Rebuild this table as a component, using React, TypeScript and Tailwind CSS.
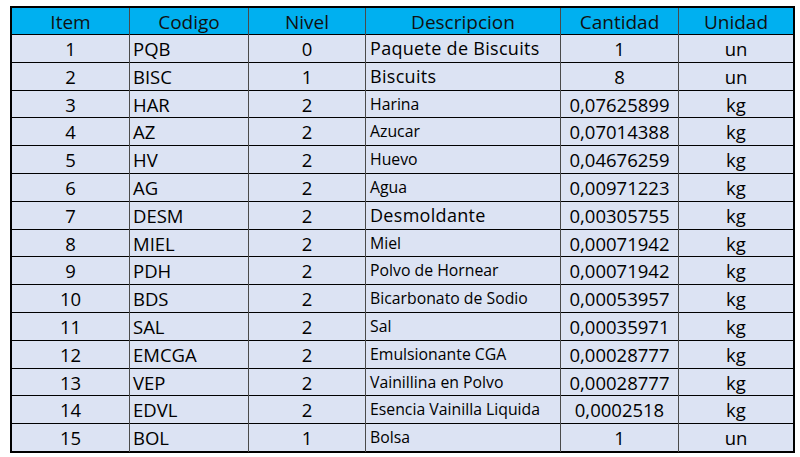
import React from 'react'

interface Row {
  item: number
  codigo: string
  nivel: number
  descripcion: string
  big?: boolean
  cantidad: string
  unidad: string
}

const rows: Row[] = [
  { item: 1, codigo: 'PQB', nivel: 0, descripcion: 'Paquete de Biscuits', big: true, cantidad: '1', unidad: 'un' },
  { item: 2, codigo: 'BISC', nivel: 1, descripcion: 'Biscuits', big: true, cantidad: '8', unidad: 'un' },
  { item: 3, codigo: 'HAR', nivel: 2, descripcion: 'Harina', cantidad: '0,07625899', unidad: 'kg' },
  { item: 4, codigo: 'AZ', nivel: 2, descripcion: 'Azucar', cantidad: '0,07014388', unidad: 'kg' },
  { item: 5, codigo: 'HV', nivel: 2, descripcion: 'Huevo', cantidad: '0,04676259', unidad: 'kg' },
  { item: 6, codigo: 'AG', nivel: 2, descripcion: 'Agua', cantidad: '0,00971223', unidad: 'kg' },
  { item: 7, codigo: 'DESM', nivel: 2, descripcion: 'Desmoldante', big: true, cantidad: '0,00305755', unidad: 'kg' },
  { item: 8, codigo: 'MIEL', nivel: 2, descripcion: 'Miel', cantidad: '0,00071942', unidad: 'kg' },
  { item: 9, codigo: 'PDH', nivel: 2, descripcion: 'Polvo de Hornear', cantidad: '0,00071942', unidad: 'kg' },
  { item: 10, codigo: 'BDS', nivel: 2, descripcion: 'Bicarbonato de Sodio', cantidad: '0,00053957', unidad: 'kg' },
  { item: 11, codigo: 'SAL', nivel: 2, descripcion: 'Sal', cantidad: '0,00035971', unidad: 'kg' },
  { item: 12, codigo: 'EMCGA', nivel: 2, descripcion: 'Emulsionante CGA', cantidad: '0,00028777', unidad: 'kg' },
  { item: 13, codigo: 'VEP', nivel: 2, descripcion: 'Vainillina en Polvo', cantidad: '0,00028777', unidad: 'kg' },
  { item: 14, codigo: 'EDVL', nivel: 2, descripcion: 'Esencia Vainilla Liquida', cantidad: '0,0002518', unidad: 'kg' },
  { item: 15, codigo: 'BOL', nivel: 1, descripcion: 'Bolsa', cantidad: '1', unidad: 'un' },
]

const grid = 'grid grid-cols-[117px_119px_117px_195px_118px_115px]'
const cell = 'flex items-center border-l border-[#4a4a4a] first:border-l-0'

export default function App() {
  return (
    <div className="min-h-[457px] w-[800px] bg-white pt-[6px] pl-[10px] text-black" style={{ fontFamily: '"Open Sans", "Liberation Sans", sans-serif' }}>
      <div className="w-[785px] border-2 border-black">
        <div className={`${grid} h-[26px] bg-[#00b0f0] text-[19px] text-[#111]`}>
          {['Item', 'Codigo', 'Nivel', 'Descripcion', 'Cantidad', 'Unidad'].map((h) => (
            <div key={h} className={`${cell} justify-center`}>{h}</div>
          ))}
        </div>
        {rows.map((r) => (
          <div key={r.item} className={`${grid} h-[27.8px] border-t border-black bg-[#dce3f3] text-[18.5px]`}>
            <div className={`${cell} justify-center`}>{r.item}</div>
            <div className={`${cell} pl-[3px]`}>{r.codigo}</div>
            <div className={`${cell} justify-center`}>{r.nivel}</div>
            <div className={`${cell} pl-[4px] ${r.big ? 'text-[18px] tracking-[0.3px]' : 'text-[15.8px]'}`}>{r.descripcion}</div>
            <div className={`${cell} justify-center`}>{r.cantidad}</div>
            <div className={`${cell} justify-center`}>{r.unidad}</div>
          </div>
        ))}
      </div>
    </div>
  )
}
